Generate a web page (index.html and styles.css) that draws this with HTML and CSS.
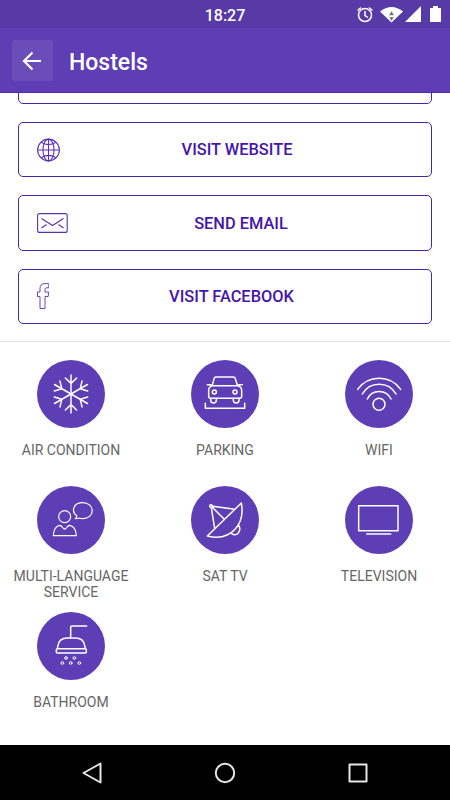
FILE: index.html
```html
<!DOCTYPE html>
<html lang="en">
<head>
  <meta charset="UTF-8" />
  <meta name="viewport" content="width=device-width, initial-scale=1.0"/>
  <title>Hostels</title>
  <link rel="stylesheet" href="styles.css">
</head>
<body>

  <div class="status-bar">
    <span class="time">18:27</span>
    <svg class="status-icons" width="86" height="20" viewBox="0 0 86 20">
      <g fill="none" stroke="#fff" stroke-width="1.5">
        <circle cx="9" cy="11" r="6.5"/>
        <path d="M9 7v4.500l3 2M1.500 6.500l3.500-3M16.500 6.500l-3.500-3"/>
      </g>
      <path fill="#fff" d="M24 7.500Q35.500-1.500 47 7.500L35.500 18.500z"/>
      <path fill="#777" d="M33 11.200h5l-2.500-4zM33.300 13h4.400l-2.200 4z"/>
      <path fill="#fff" d="M65 2v16H49zM74 4h3V2h5v2h3v14H74z"/>
    </svg>
  </div>

  <header>
    <button class="back-btn" aria-label="Back">
      <svg width="20" height="20" viewBox="0 0 20 20">
        <path d="M19 10H2M10.500 1.500L2 10l8.500 8.500"/>
      </svg>
    </button>
    <h1>Hostels</h1>
  </header>

  <main>
    <div class="links">
      <div class="link-btn"></div>
      <div class="link-btn">
        <svg width="23" height="24" viewBox="0 0 23 24">
          <circle cx="11.500" cy="12" r="10.900"/>
          <ellipse cx="11.500" cy="12" rx="5.500" ry="10.900"/>
          <path d="M11.500 1v22M.500 12h22M4 4.300q7.500 4.600 15 0M4 19.700q7.500-4.600 15 0"/>
        </svg>
        <span>VISIT WEBSITE</span>
      </div>
      <div class="link-btn">
        <svg width="31" height="20" viewBox="0 0 31 20">
          <rect x=".600" y=".600" width="29.600" height="18.800" rx="2"/>
          <path d="M4.500 5.500l11 7 11-7M4.500 15l5-3.500M26.500 15l-5-3.500"/>
        </svg>
        <span>SEND EMAIL</span>
      </div>
      <div class="link-btn">
        <svg width="12" height="26" viewBox="0 0 12 26">
          <path class="thin" d="M3 25.500V13.500H.500V9H3V5.500Q3 .600 8 .600h3.800v4.200H9.500Q8 4.800 8 6.500V9h3.800l-.600 4.500H8v12z"/>
        </svg>
        <span>VISIT FACEBOOK</span>
      </div>
    </div>

    <div class="amenities">
      <div class="amenity">
        <svg class="icon" viewBox="0 0 204 204">
          <defs>
            <path id="arm" d="M102 102V45M85 54l17 16 17-16"/>
          </defs>
          <use href="#arm"/>
          <use href="#arm" transform="rotate(60 102 102)"/>
          <use href="#arm" transform="rotate(120 102 102)"/>
          <use href="#arm" transform="rotate(180 102 102)"/>
          <use href="#arm" transform="rotate(240 102 102)"/>
          <use href="#arm" transform="rotate(300 102 102)"/>
        </svg>
        <span>AIR CONDITION</span>
      </div>
      <div class="amenity">
        <svg class="icon" viewBox="0 0 204 204">
          <path d="M64 76l5-20q1-5 6-5h52q5 0 6 5l6 20M49 74h11M143 74h11M64 77h76q12 3 12 14v18q0 6-6 6H59q-6 0-6-6V91q0-11 11-14z"/>
          <circle cx="70" cy="96" r="6"/>
          <circle cx="132" cy="96" r="6"/>
          <path d="M59 115v6q0 8 8.500 8t8.500-8v-6M127 115v6q0 8 8.500 8t8.500-8v-6M43 130v15h118v-15"/>
        </svg>
        <span>PARKING</span>
      </div>
      <div class="amenity">
        <svg class="icon" viewBox="0 0 204 204">
          <circle cx="102" cy="133" r="18"/>
          <path d="M38 88A79 79 0 0 1 167 88M52 102A58 58 0 0 1 153 102M67 117A39.500 39.500 0 0 1 138 117"/>
        </svg>
        <span>WIFI</span>
      </div>
      <div class="amenity">
        <svg class="icon fine" viewBox="0 0 204 204">
          <circle cx="83" cy="92" r="18"/>
          <path d="M49 149q1-27 19-31 5 0 8 6l7 6 7-6q3-6 8-6 19 4 20 31z"/>
          <path d="M115 98q6-6 4-9c-18-14-9-39 18-39 38 0 38 48 0 48q-6 0-10-2-5 2-12 2z"/>
        </svg>
        <span>MULTI-LANGUAGE SERVICE</span>
      </div>
      <div class="amenity">
        <svg class="icon" viewBox="0 0 204 204">
          <circle cx="60" cy="60" r="4"/>
          <path d="M65 61l67 9M64 64l36 36M61 65l10 63M151 51L49 150q53 13 83-20 28-30 19-79zM122 143c15 10 31-7 21-26"/>
        </svg>
        <span>SAT TV</span>
      </div>
      <div class="amenity">
        <svg class="icon" viewBox="0 0 204 204">
          <rect x="41" y="59" width="118" height="75"/>
          <path d="M65 144h72"/>
        </svg>
        <span>TELEVISION</span>
      </div>
      <div class="amenity">
        <svg class="icon" viewBox="0 0 204 204">
          <path d="M149 42h-44q-4 0-4 4v32M62 109v-5q3-26 29-26h24q26 0 29 26v5"/>
          <rect x="58" y="110" width="90" height="13" rx="3"/>
          <g class="drops">
            <circle cx="87" cy="138" r="4"/>
            <circle cx="112" cy="138" r="4"/>
            <circle cx="76" cy="153" r="4"/>
            <circle cx="101" cy="153" r="4"/>
            <circle cx="127" cy="153" r="4"/>
          </g>
        </svg>
        <span>BATHROOM</span>
      </div>
    </div>
  </main>

  <nav>
    <svg width="22" height="24" viewBox="0 0 22 24"><path d="M19.500 2.500v19L2.500 12z"/></svg>
    <svg width="22" height="24" viewBox="0 0 22 24"><circle cx="11" cy="12" r="9.200"/></svg>
    <svg width="22" height="24" viewBox="0 0 22 24"><rect x="2.500" y="3.500" width="17" height="17"/></svg>
  </nav>

</body>
</html>
```
FILE: styles.css
```css
* {
  box-sizing: border-box;
}

body {
  margin: 0;
  height: 800px;
  display: flex;
  flex-direction: column;
  overflow: hidden;
  font-family: Roboto, sans-serif;
  background: #fff;
}

svg {
  display: block;
  flex-shrink: 0;
  fill: none;
}

.status-bar {
  height: 28px;
  padding: 2px 8px 0 0;
  display: grid;
  grid-template-columns: 1fr auto 1fr;
  align-items: center;
  background: #573aa5;
  color: #fff;
}

.time {
  grid-column: 2;
  padding-left: 8px;
  font-size: 16px;
  font-weight: 500;
}

.status-icons {
  justify-self: end;
  margin-bottom: 2px;
}

header {
  height: 65px;
  padding: 1px 12px 0;
  display: flex;
  align-items: center;
  gap: 16px;
  background: #5e3eb4;
  border-bottom: 1px solid #5026b0;
  color: #fff;
}

.back-btn {
  width: 41px;
  height: 41px;
  padding: 0 1px 0 0;
  display: flex;
  align-items: center;
  justify-content: center;
  border: none;
  border-radius: 3px;
  background: #6b4dba;
}

.back-btn svg {
  stroke: #fff;
  stroke-width: 2.2;
}

h1 {
  margin: 3px 0 0;
  font-size: 23px;
  font-weight: 500;
}

main {
  flex: 1;
  min-height: 0;
  overflow: hidden;
}

.links {
  height: 249px;
  padding: 0 18px 17px;
  display: flex;
  flex-direction: column;
  justify-content: flex-end;
  gap: 18px;
  overflow: hidden;
  border-bottom: 1px solid #e4e4e4;
}

.link-btn {
  height: 55.3px;
  flex-shrink: 0;
  padding: 0 17px 0 18px;
  display: flex;
  align-items: center;
  border: 1.5px solid #4326ae;
  border-radius: 5px;
  color: #4516aa;
  font-size: 16.4px;
  font-weight: 500;
  text-align: center;
}

.link-btn svg {
  stroke: #5a32b4;
  stroke-width: 1.1;
}

.link-btn .thin {
  stroke-width: 0.9;
}

.link-btn span {
  flex: 1;
}

.amenities {
  padding: 18px 12px 0;
  display: grid;
  grid-template-columns: repeat(3, 118px);
  grid-auto-rows: 126px;
  column-gap: 36px;
}

.amenity {
  display: flex;
  flex-direction: column;
  align-items: center;
  gap: 14px;
  color: #666;
  font-size: 14px;
  line-height: 16px;
  text-align: center;
}

.icon {
  width: 68px;
  height: 68px;
  border-radius: 50%;
  background: #5e3eb4;
  stroke: #fff;
  stroke-width: 4.5;
  stroke-linecap: round;
  stroke-linejoin: round;
}

.fine {
  stroke-width: 3.5;
}

.drops {
  stroke-width: 3;
}

nav {
  height: 55px;
  padding: 0 81px;
  display: flex;
  align-items: center;
  justify-content: space-between;
  background: #000;
}

nav svg {
  stroke: #e6e6e6;
  stroke-width: 2;
  stroke-linejoin: round;
}
```
